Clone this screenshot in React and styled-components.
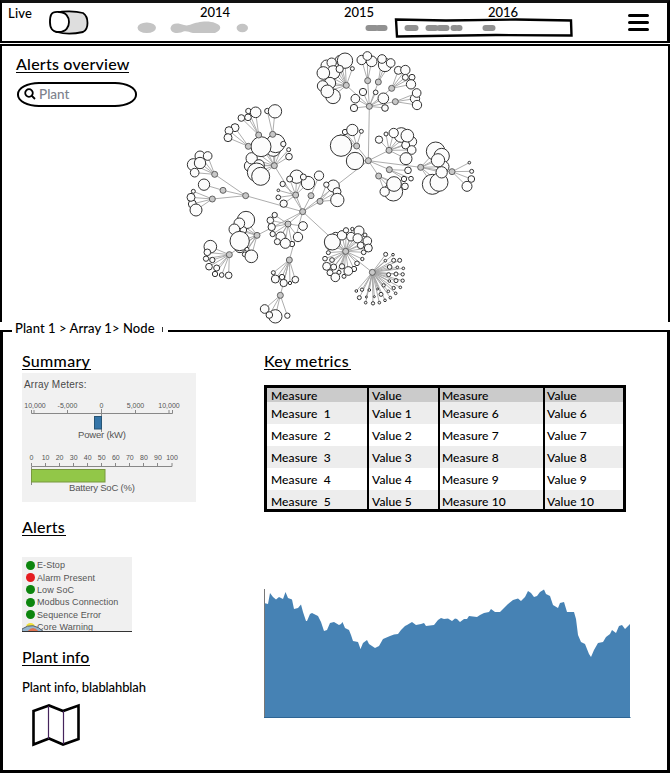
import React from "react";
import styled, { createGlobalStyle } from "styled-components";

const GlobalStyle = createGlobalStyle`
  * { box-sizing: border-box; }
  body { margin: 0; background: #fff; color: #000; font-family: Lato, "Open Sans", sans-serif; font-size: 13px; font-weight: 500; }
  svg { display: block; flex: none; overflow: visible; }
`;

const Page = styled.div`
  width: 671px;
  height: 774px;
  overflow: hidden;
`;

const TopBar = styled.header`
  display: flex;
  align-items: flex-start;
  width: 670px;
  height: 43px;
  margin-bottom: 1px;
  border: solid #000;
  border-width: 3px 3px 2px 2px;
  border-top-color: #111;
`;

const Label = styled.span`
  display: block;
  white-space: nowrap;
  font-size: ${(p) => p.$size || 13}px;
  line-height: ${(p) => p.$line || 16}px;
  letter-spacing: ${(p) => p.$track || 0}px;
`;

const LiveSlot = styled.div`
  width: 47px;
  padding: 2px 0 0 6px;
`;

const ToggleIcon = styled.svg`
  margin-top: 7px;
`;

const Timeline = styled.div`
  position: relative;
  width: 446px;
  margin-left: 46px;
`;

const Years = styled.div`
  display: grid;
  grid-template-columns: 144px 144px 60px;
  padding: 1px 0 0 64px;
`;

const RangeBox = styled.svg`
  position: absolute;
  left: 259.5px;
  top: 14px;
`;

const MenuIcon = styled.svg`
  margin: 11px 0 0 46px;
`;

const Overview = styled.section`
  display: flex;
  width: 670px;
  height: 278px;
  border: solid #000;
  border-width: 2px 2px 0 2px;
`;

const SearchColumn = styled.div`
  width: 178px;
  padding: 6px 0 0 14px;
`;

const GraphArea = styled.div`
  padding-top: 1px;
`;

const Heading = styled.h2`
  width: ${(p) => p.$width}px;
  height: 21px;
  margin: 0;
  border-bottom: 1px solid #000;
  font-weight: 500;
  font-size: 16px;
  line-height: 24px;
  letter-spacing: ${(p) => p.$track || 0}px;
  white-space: nowrap;
`;

const SearchBox = styled.div`
  display: flex;
  align-items: center;
  gap: 3px;
  width: 120px;
  height: 25px;
  margin: 9px 0 0 1px;
  padding: 0 0 1px 5px;
  border: 2px solid #000;
  border-radius: 22px / 12px;
  color: #7d818c;
`;

const Detail = styled.section`
  width: 670px;
  height: 450px;
  margin-top: 2px;
`;

const Legend = styled.div`
  display: flex;
  align-items: flex-start;
  height: 10px;
`;

const LegendRule = styled.div`
  width: ${(p) => (p.$width ? `${p.$width}px` : "auto")};
  flex: ${(p) => (p.$width ? "none" : 1)};
  height: 2px;
  margin-top: 6px;
  background: #000;
`;

const LegendText = styled.div`
  display: flex;
  align-items: center;
  gap: 7px;
  width: 156px;
  padding-left: 3px;
  margin-top: -4px;
`;

const CutMark = styled.span`
  width: 1px;
  height: 5px;
  margin-top: 2px;
  background: #333;
`;

const DetailBody = styled.div`
  display: flex;
  height: 442px;
  margin-top: -3px;
  border: solid #000;
  border-width: 0 3px 3px 3px;
`;

const SideColumn = styled.div`
  width: 242px;
  padding: 18px 0 0 19px;
`;

const MainColumn = styled.div`
  width: 386px;
  padding: 18px 0 0 19px;
`;

const MeterCard = styled.div`
  width: 174px;
  height: 129px;
  margin: 3px 0 13px;
  padding-top: 5px;
  background: #f1f1f1;
  color: #484848;
  font-family: "Liberation Sans", Arial, sans-serif;
`;

const CardTitle = styled.div`
  padding-left: 2px;
  font-size: 10px;
  letter-spacing: 0.2px;
  line-height: 13px;
`;

const Meter = styled.svg`
  font-family: "Liberation Sans", Arial, sans-serif;
`;

const AlertCard = styled.div`
  position: relative;
  width: 110px;
  height: 75px;
  margin: 21px 0 13px;
  padding: 2px 0 0 4px;
  overflow: hidden;
  background: #f0f0f0;
  border-bottom: 1px solid #333;
  color: #555;
  font-family: "Liberation Sans", Arial, sans-serif;
`;

const AlertRow = styled.div`
  display: flex;
  align-items: center;
  gap: 2px;
  height: 12.4px;
  font-size: 9px;
  letter-spacing: 0.08px;
  white-space: nowrap;
`;

const Dot = styled.span`
  width: 9px;
  height: 9px;
  border-radius: 50%;
  background: ${(p) => p.$color};
`;

const CornerBadge = styled.svg`
  position: absolute;
  left: 0;
  bottom: -1px;
`;

const InfoText = styled.div`
  margin-top: 13px;
`;

const MapIcon = styled.svg`
  margin: 9px 0 0 10px;
`;

const Table = styled.div`
  display: grid;
  grid-template-columns: 100px 71px 105px 80px;
  grid-template-rows: 14px repeat(4, 22px) 19px;
  width: 362px;
  height: 127px;
  margin: 15px 0 77px;
  border: 3px solid #000;
`;

const Cell = styled.div`
  padding: ${(p) => (p.$head ? "0" : "3px")} 0 0 ${(p) => p.$inset}px;
  background: ${(p) => p.$tone};
  border-left: ${(p) => (p.$rule ? "2px solid #000" : "none")};
  font-size: 12px;
  line-height: ${(p) => (p.$head ? "15px" : "17px")};
  letter-spacing: 0.1px;
  white-space: pre;
`;

// Cluster coordinates are in thirds of a pixel; leaves are [x, y, radius].
const clusters = [
  { o: [300, 45], h: [139, 121], p: [208, 184], n: [[120,45,14],[80,62,17],[95,53,14],[100,82,20],[70,84,19],[90,114,17],[68,123,16],[99,154,22],[82,139,19],[135,47,23],[119,72,11],[157,71,6]] },
  { o: [300, 45], h: [203, 107], p: [208, 184], n: [[185,45,14],[215,49,16],[202,33,13]] },
  { o: [300, 45], h: [235, 111], p: [208, 184], n: [[255,60,20],[246,42,13],[272,54,13]] },
  { o: [300, 45], h: [275, 130], p: [208, 184], n: [[295,76,12],[316,75,14],[316,97,9],[336,97,9],[333,118,14]] },
  { o: [300, 45], h: [286, 170], p: [208, 184], n: [[345,161,14],[350,144,13],[351,180,14]] },
  { o: [300, 45], h: [208, 184], p: [205, 347], n: [[189,141,11],[227,142,7],[166,161,13],[162,189,11],[250,160,16],[255,189,10]] },
  { o: [300, 45], h: [170, 303], p: [205, 347], n: [[122,276,6],[123,302,32],[135,261,8],[157,255,17],[184,259,6]] },
  { o: [300, 45], h: [267, 316], p: [205, 347], n: [[237,284,11],[258,267,6],[304,270,22],[281,264,14],[335,290,15],[317,300,12],[322,272,19],[335,315,13],[318,341,18]] },
  { o: [300, 45], h: [268, 374], p: [205, 347], n: [[324,376,10],[312,402,8],[333,401,7]] },
  { o: [300, 45], h: [236, 393], p: [205, 347], n: [[280,440,28],[315,424,10],[282,417,22],[254,440,14]] },
  { o: [300, 45], h: [362, 367], p: [205, 347], n: [[407,319,28],[425,333,23],[397,418,30],[430,365,17],[417,412,27],[414,346,20],[425,382,17]] },
  { o: [300, 45], h: [456, 380], p: [362, 367], n: [[508,353,4],[515,379,6],[514,402,10],[501,424,15]] },
  { o: [300, 45], h: [205, 347], p: [8, 500], n: [[165,348,26]] },
  { o: [180, 95], h: [236, 120], p: [283, 212], n: [[205,48,8],[184,69,10],[204,67,10],[227,52,16]] },
  { o: [180, 95], h: [278, 118], p: [283, 212], n: [[262,48,8],[285,49,20]] },
  { o: [180, 95], h: [205, 154], p: [283, 212], n: [[165,98,12],[147,107,12],[144,128,12]] },
  { o: [180, 95], h: [283, 212], p: [368, 350], n: [[280,162,22],[287,145,28],[310,147,8],[326,164,6],[327,185,10],[210,213,17],[215,190,17],[237,210,16],[230,232,28],[242,244,27],[243,155,30]] },
  { o: [180, 95], h: [104, 238], p: [197, 302], n: [[60,183,15],[83,183,13],[40,209,18],[44,233,13],[60,204,17]] },
  { o: [180, 95], h: [129, 286], p: [197, 302], n: [[72,269,17]] },
  { o: [180, 95], h: [97, 312], p: [197, 302], n: [[40,289,6],[37,327,12],[33,307,12],[48,345,18]] },
  { o: [180, 95], h: [197, 302], p: [368, 350], n: [] },
  { o: [180, 95], h: [347, 300], p: [368, 350], n: [[308,267,8],[295,286,4],[295,307,7],[311,326,11],[350,245,20],[329,252,9],[384,264,20],[370,246,9]] },
  { o: [180, 95], h: [393, 302], p: [368, 350], n: [[417,242,14]] },
  { o: [180, 95], h: [420, 319], p: [368, 350], n: [[460,273,18],[439,269,8],[471,290,12],[472,315,20]] },
  { o: [180, 195], h: [324, 87], p: [368, 50], n: [[284,60,8],[271,76,10],[275,96,11],[278,117,8],[302,125,14],[292,140,9],[336,147,8],[316,145,15],[354,126,14],[369,93,13]] },
  { o: [180, 195], h: [231, 121], p: [368, 50], n: [[198,75,26],[190,105,10],[178,85,16],[163,103,16],[180,157,16],[179,138,29],[194,178,7],[201,163,6],[214,184,19]] },
  { o: [180, 195], h: [148, 179], p: [231, 121], n: [[91,155,19],[82,172,10],[78,191,8],[97,195,8],[87,215,10],[110,219,9],[105,237,8],[125,240,7],[146,241,10]] },
  { o: [180, 195], h: [328, 195], p: [368, 50], n: [[280,233,6],[286,252,12],[306,246,8],[311,264,11],[330,264,5],[346,254,10]] },
  { o: [180, 195], h: [301, 301], p: [328, 195], n: [[254,342,13],[286,364,20],[268,360,10],[322,362,8]] },
  { o: [180, 195], h: [368, 50], p: [368, 50], n: [] },
  { o: [300, 190], h: [137, 184], p: [8, 65], n: [[107,140,13],[90,165,14],[97,156,24],[126,136,14],[138,121,8],[157,117,5],[177,123,15],[153,140,13],[195,135,6],[173,145,14],[202,153,13],[182,166,10],[205,174,12],[191,187,7],[187,207,5],[171,220,7],[162,237,8],[145,243,13],[85,188,6],[75,206,7],[96,210,7],[80,229,12],[101,231,9],[90,248,9],[106,262,13],[126,229,8],[117,247,6],[132,259,6]] },
  { o: [300, 190], h: [217, 247], p: [137, 184], n: [[257,193,6],[279,194,4],[256,212,4],[281,211,6],[299,211,6],[269,231,7],[292,232,4],[310,235,4],[266,254,6],[288,252,6],[308,253,5],[268,273,4],[288,272,6],[308,272,5],[251,286,5],[281,294,5],[301,292,4],[265,304,4],[287,310,4],[243,313,6],[271,323,4],[255,331,4],[238,338,4],[219,340,5],[197,338,4],[178,323,6],[169,303,4],[186,299,5],[208,300,4],[199,321,3],[223,320,3],[233,297,3]] },
];

function PlantGraph() {
  const at = (c, q) => [c.o[0] + q[0] / 3 - 180, c.o[1] + q[1] / 3 - 47];
  const spoke = (c, q, key) => {
    const [x1, y1] = at(c, c.h);
    const [x2, y2] = at(c, q);
    return <line key={key} x1={x1} y1={y1} x2={x2} y2={y2} />;
  };
  return (
    <svg width="300" height="275" viewBox="0 0 300 275">
      <g stroke="#a4a4a4" strokeWidth="0.9">
        {clusters.map((c, i) => [c.p, ...c.n].map((q, j) => spoke(c, q, `${i}-${j}`)))}
      </g>
      <g fill="#fcfcfc" stroke="#333" strokeWidth="1">
        {clusters.map((c, i) =>
          c.n.map((q, j) => {
            const [cx, cy] = at(c, q);
            return <circle key={`${i}-${j}`} cx={cx} cy={cy} r={Math.max(1, q[2] / 3)} />;
          })
        )}
      </g>
      <g fill="#c8c8c8" stroke="#555" strokeWidth="0.9">
        {clusters.map((c, i) => {
          const [cx, cy] = at(c, c.h);
          return <circle key={i} cx={cx} cy={cy} r="3" />;
        })}
      </g>
    </svg>
  );
}

const pills = [[365, 13], [375, 12], [404, 14], [425, 13], [436, 13], [450, 8], [455, 7], [482, 13]];

function Activity() {
  return (
    <svg width="446" height="16" viewBox="0 0 446 16">
      <g fill="#c4c4c4">
        <rect x="1.500" y="2.500" width="18.500" height="10.500" rx="9" ry="5.250" />
        <path d="M34.500 8C35.500 2.500 42 2.500 48 5C53 6.500 55 3.500 62 2.500C67 1 75 1 79 3C86 5 86 10 79 13H57C52 12 50 10 45 12.500C39 14 34.500 12 34.500 8Z" />
        <ellipse cx="106.300" cy="8" rx="5.700" ry="4.200" />
      </g>
      <g fill="#919191">
        {pills.map(([x, w]) => <rect key={x} x={x - 135.500} y="5" width={w} height="6" rx="3" />)}
      </g>
    </svg>
  );
}

const powerTicks = [[13, "10,000"], [45.500, "-5,000"], [79.500, "0"], [113.500, "5,000"], [147, "10,000"]];

function Meters() {
  return (
    <Meter width="174" height="111" viewBox="0 18 174 111" fill="#555">
      <g fontSize="7" textAnchor="middle">
        {powerTicks.map(([x, t]) => <text key={x} x={x} y="34.500">{t}</text>)}
        {Array.from({ length: 11 }, (_, i) => (
          <text key={i} x={9.500 + i * 14.050} y="87.300">{i * 10}</text>
        ))}
      </g>
      <path fill="none" stroke="#888" d="M9.500 37V40.500H150.500V37M12 37V40M45.500 37V40M79.500 36V59M113.500 37V40M147 37V40" />
      <rect x="72.500" y="43.500" width="7" height="12.500" fill="#3575a8" stroke="#285575" />
      <path fill="none" stroke="#888" d="M9.500 90V93.500H150V90M23.500 90V93M37.500 90V93M51.500 90V93M65.500 90V93M79.500 90V93M93.500 90V93M107.500 90V93M121.500 90V93M135.500 90V93M9.500 94V112" />
      <rect x="9.500" y="96.500" width="73.500" height="12.500" fill="#92c748" stroke="#78983e" />
      <g fontSize="9.500" textAnchor="middle">
        <text x="80" y="65" textLength="48">Power (kW)</text>
        <text x="80" y="118" textLength="66">Battery SoC (%)</text>
      </g>
    </Meter>
  );
}

const alerts = [
  ["E-Stop", "#0c850e"],
  ["Alarm Present", "#e51c20"],
  ["Low SoC", "#0c850e"],
  ["Modbus Connection", "#0c850e"],
  ["Sequence Error", "#0c850e"],
  ["Core Warning", "#f1e238"],
];

const rows = [1, 2, 3, 4, 5];

function Metrics() {
  const line = (a, b, c, d, tone, head) => (
    <React.Fragment key={b}>
      <Cell $tone={tone} $head={head} $inset={4}>{a}</Cell>
      <Cell $tone={tone} $head={head} $inset={3} $rule>{b}</Cell>
      <Cell $tone={tone} $head={head} $inset={2} $rule>{c}</Cell>
      <Cell $tone={tone} $head={head} $inset={2} $rule>{d}</Cell>
    </React.Fragment>
  );
  return (
    <Table>
      {line("Measure", "Value", "Measure", "Value", "#cbcbcb", true)}
      {rows.map((n) =>
        line(`Measure  ${n}`, `Value ${n}`, `Measure ${n + 5}`, `Value ${n + 5}`, n % 2 ? "#ededed" : "#fff", false)
      )}
    </Table>
  );
}

const area =
  "M0 14L4 15 6 4 9 8 12 10.500 15 8 19 10 21.500 3 24 9 28 10.500 30 20 34 19 37 15.500 39 23 42 32 43 32 46 25 48 24 54 27 57 33 60 42 63 41 66 34 70 33 75 36 77 35 78.500 33 81 39 85 41 87 46 89 52 94 53 96.500 60 99 54 103 51 105 55 111 59 115 57 119 50 126 47 130 45.500 134 45 137 41 141 37 143 36 148 33 152 36 157 35 160 34 162 37 170 36 174 31 177 29 180 30 184 29.500 188 32 191 29.500 193 30 196 33 200 30 203 30 205 27 213 28 216 26 220 24 225 23 227 20 231 23 236 23 240 19 244 15 249 11 254 9.500 257 12 261 8 264 2 267 4 270 8 273 7 276 3 280 .5 282 5 286 7 289 16 294 19 296 14 300 13 303 23 310 23 312 30 314 46 317 53 321 55 325 65 327 68 330 61 334 54 339 53 342 48 346 45 348 41 352 44 355 37 358 36 361 40 366 35V128H0Z";

export default function App() {
  return (
    <Page>
      <GlobalStyle />
      <TopBar>
        <LiveSlot><Label $track={0.2}>Live</Label></LiveSlot>
        <ToggleIcon width="41" height="25" viewBox="0 0 41 25" stroke="#000" strokeWidth="1.800">
          <path d="M8 2.500C14 1 26 1 34 3C40 7 40 19 34 22C25 24 15 24 8 22C-1 20-1 5 8 2.500Z" fill="#dedede" />
          <path d="M10 2C1 1 1 7 1 12C1 18 3 22 10 22C17 22 20 17 20 12C20 7 17 2 10 2Z" fill="#fff" />
        </ToggleIcon>
        <Timeline>
          <Years>
            {[2014, 2015, 2016].map((y) => <Label key={y}>{y}</Label>)}
          </Years>
          <Activity />
          <RangeBox width="179" height="22" viewBox="0 0 179 22" fill="none" stroke="#000">
            <path d="M0 2.500L50 3.500 120 2.500 175 3.500 175.500 18.500 100 18 1 19.500Z" strokeWidth="2.400" />
          </RangeBox>
        </Timeline>
        <MenuIcon width="22" height="18" viewBox="0 0 22 18">
          <path d="M1.500 1.500H19.500M1.500 8.500H19.500M1.500 15.500H19.500" stroke="#000" strokeWidth="3" strokeLinecap="round" />
        </MenuIcon>
      </TopBar>
      <Overview>
        <SearchColumn>
          <Heading $width={113} $track={0.22}>Alerts overview</Heading>
          <SearchBox>
            <svg width="12" height="12" viewBox="0 0 12 12" fill="none" stroke="#000" strokeWidth="1.800">
              <circle cx="5" cy="5" r="3.800" />
              <path d="M7.500 7.500L11 11" />
            </svg>
            <Label $size={13.5}>Plant</Label>
          </SearchBox>
        </SearchColumn>
        <GraphArea><PlantGraph /></GraphArea>
      </Overview>
      <Detail>
        <Legend>
          <LegendRule $width={12} />
          <LegendText><Label $track={0.08}>Plant 1 &gt; Array 1&gt; Node</Label><CutMark /></LegendText>
          <LegendRule />
        </Legend>
        <DetailBody>
          <SideColumn>
            <Heading $width={69} $track={0.3}>Summary</Heading>
            <MeterCard>
              <CardTitle>Array Meters:</CardTitle>
              <Meters />
            </MeterCard>
            <Heading $width={44} $track={0.2}>Alerts</Heading>
            <AlertCard>
              {alerts.map(([name, color]) => (
                <AlertRow key={name}><Dot $color={color} />{name}</AlertRow>
              ))}
              <CornerBadge width="24" height="8" viewBox="0 0 24 8">
                <path d="M0 5Q11-3 22 8H0Z" fill="#95b5ce" stroke="#59626b" />
                <path d="M5 8Q11 0 17 8Z" fill="#df7351" />
              </CornerBadge>
            </AlertCard>
            <Heading $width={68}>Plant info</Heading>
            <InfoText><Label $track={-0.1}>Plant info, blablahblah</Label></InfoText>
            <MapIcon width="50" height="42" viewBox="0 0 50 42" fill="none" stroke="#000">
              <path d="M1.500 7L17 1.500 31 7 46.500 1.500V35L31 40.500 17 34.500 1.500 40.500Z" strokeWidth="2.600" />
              <path d="M16.500 2V35M31.500 7V40" stroke="#45245c" strokeWidth="1.200" />
            </MapIcon>
          </SideColumn>
          <MainColumn>
            <Heading $width={87} $track={0.25}>Key metrics</Heading>
            <Metrics />
            <svg width="367" height="130" viewBox="0 0 367 130">
              <path d={area} fill="#4682b4" />
              <path d="M0.500 0V129" stroke="#777" />
              <path d="M0 128.500H366.500" stroke="#2e6594" />
            </svg>
          </MainColumn>
        </DetailBody>
      </Detail>
    </Page>
  );
}
